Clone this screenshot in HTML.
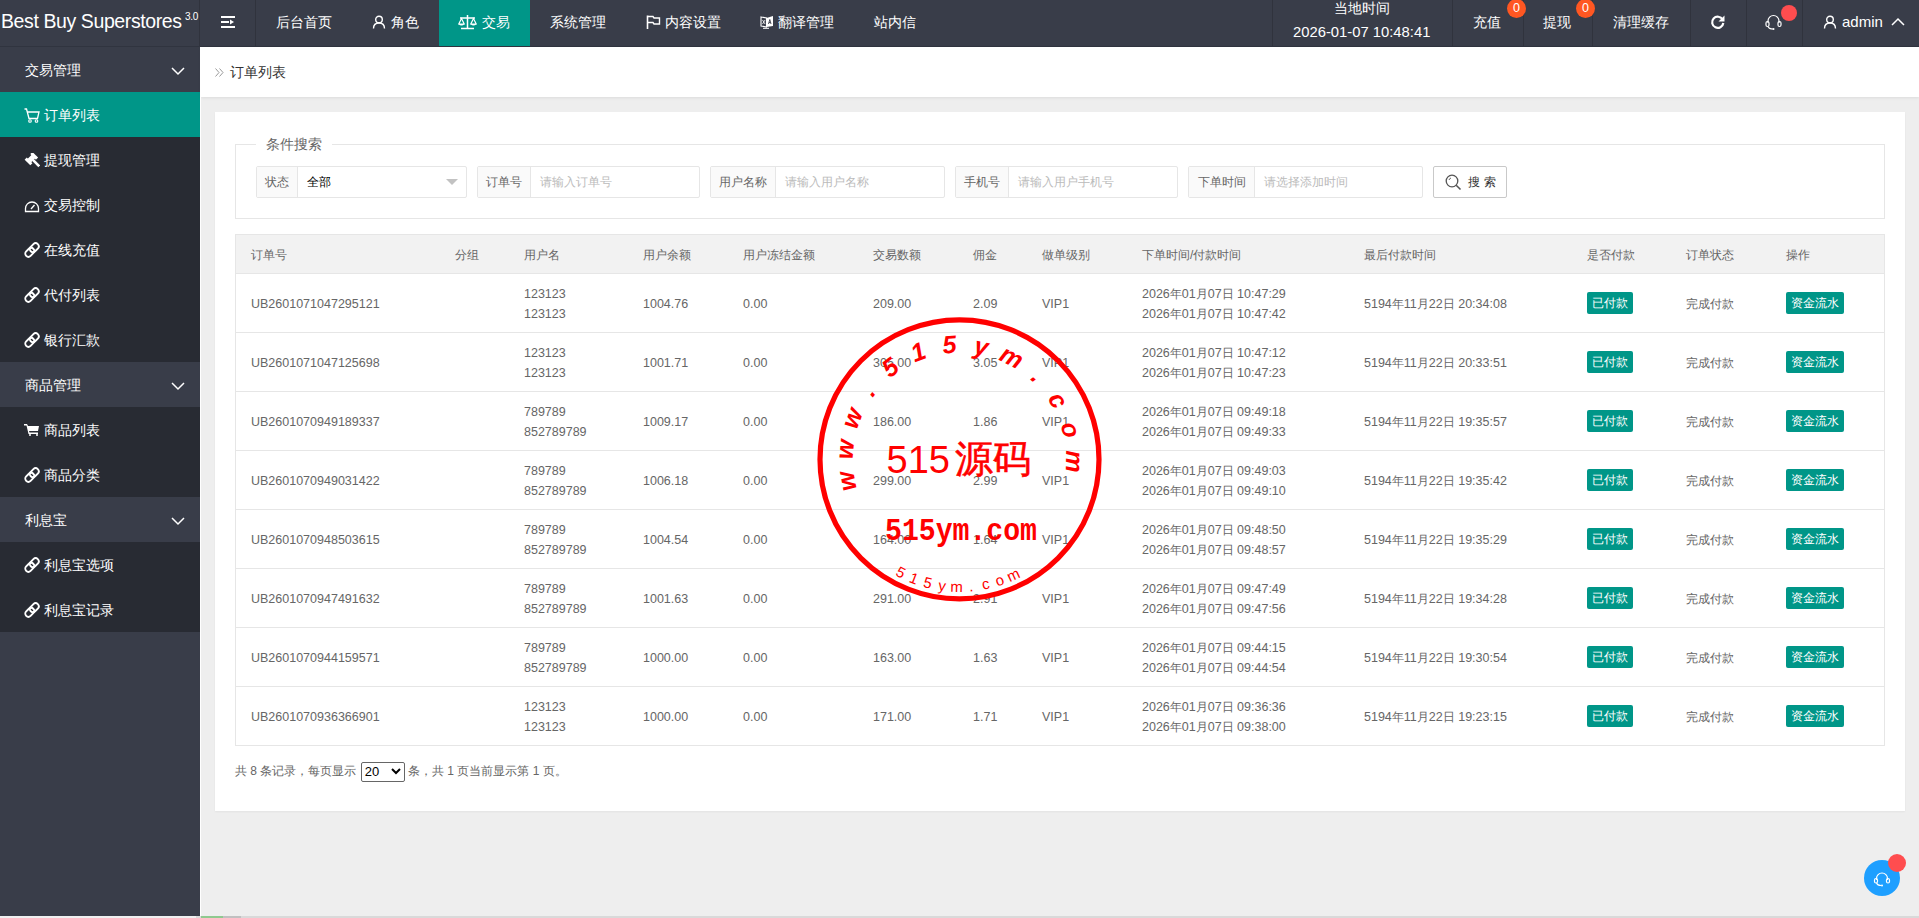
<!DOCTYPE html>
<html><head><meta charset="utf-8">
<style>
*{box-sizing:border-box;margin:0;padding:0}
html,body{width:1919px;height:918px;overflow:hidden}
body{position:relative;background:#eeeeee;font-family:"Liberation Sans",sans-serif;color:#666;font-size:14px}
.abs{position:absolute}
#hdr{left:0;top:0;width:1919px;height:47px;background:#393D49;border-bottom:1px solid #30343f}
#logo{left:1px;top:-2.5px;width:199px;height:46px;color:#fff;font-size:19.5px;line-height:46px;white-space:nowrap;letter-spacing:-0.4px}
#logo sup{font-size:10px;position:relative;top:-3px;left:5px;letter-spacing:0}
.nv{top:0;height:46px;line-height:44px;color:#fff;font-size:14px;white-space:nowrap}
.dv{top:0;width:1px;height:46px;background:#30333d}
#side{left:0;top:47px;width:200px;height:871px;background:#393D49}
.mi{position:absolute;left:0;width:200px;height:45px;line-height:45px;color:#fff;font-size:14px;white-space:nowrap}
.mi.ch{background:#282B33}
.mi.act{background:#009688}
.mi .t{position:absolute;left:44px;top:1px}
.mi.g .t{left:25px}
.mi svg{position:absolute;margin-top:1px}
#bc{left:201px;top:47px;width:1718px;height:50px;background:#fff;box-shadow:0 1px 3px rgba(0,0,0,.08)}
#card{left:215px;top:112px;width:1690px;height:699px;background:#fff;box-shadow:0 1px 2px rgba(0,0,0,.05)}
#fs{left:235px;top:144px;width:1650px;height:75px;border:1px solid #e6e6e6}
#legend{left:256px;top:135px;height:18px;padding:0 10px;background:#fff;font-size:14px;line-height:18px;color:#666}
.ig{top:166px;height:32px;border:1px solid #e6e6e6;border-radius:2px;background:#fff;font-size:12px;line-height:30px}
.ig .lb{position:absolute;left:0;top:0;height:30px;background:#fafafa;border-right:1px solid #e6e6e6;color:#666;text-align:center}
.ig .ph{position:absolute;top:0;color:#bbb;white-space:nowrap}
#tbl{left:235px;top:234px;width:1650px;height:512px;border:1px solid #e6e6e6}
.th{position:absolute;left:0;top:0;width:1648px;height:39px;background:#f2f2f2;border-bottom:1px solid #e6e6e6}
.hc{position:absolute;top:11px;line-height:18px;font-size:12px;color:#666;white-space:nowrap}
.row{position:absolute;left:0;width:1648px;height:59px;border-bottom:1px solid #e6e6e6}
.c{position:absolute;top:21px;line-height:18px;white-space:nowrap;font-size:12.5px;color:#666}
.c2{position:absolute;top:10px;line-height:20px;white-space:nowrap;font-size:12.5px;color:#666}
.badge{position:absolute;top:18px;height:22px;line-height:22px;background:#009688;color:#fff;font-size:12px;border-radius:2px;text-align:center}
.pg{font-size:12px;line-height:18px;color:#666;white-space:nowrap}
.pg .sel{display:inline-block;position:relative;width:44px;height:20px;margin-left:1px;border:1px solid #666;border-radius:2px;color:#000;font-size:13px;line-height:17px;padding-left:3px;vertical-align:middle;background:#fff}

i{font-style:normal;font-size:12px}

</style></head><body>
<div id="hdr" class="abs"></div>
<div id="logo" class="abs">Best Buy Superstores</div><div class="abs" style="left:185px;top:8px;font-size:10px;line-height:18px;color:#fff;letter-spacing:-0.3px">3.0</div>
<div class="dv abs" style="left:199px"></div>
<div class="dv abs" style="left:255px"></div>
<div class="dv abs" style="left:1272px"></div>
<div class="dv abs" style="left:1452px"></div>
<div class="dv abs" style="left:1523px"></div>
<div class="dv abs" style="left:1592px"></div>
<div class="dv abs" style="left:1690px"></div>
<div class="dv abs" style="left:1746px"></div>
<div class="dv abs" style="left:1802px"></div>
<div class="abs" style="left:439px;top:0;width:91px;height:46px;background:#009688"></div>
<svg class="abs" style="left:221px;top:15px" width="15" height="14" viewBox="0 0 15 14"><rect x="0" y="1" width="14" height="2" fill="#fff"/><rect x="0" y="6" width="8" height="2" fill="#fff"/><path d="M9 4.5 L13 7 L9 9.5Z" fill="#fff"/><rect x="0" y="11" width="14" height="2" fill="#fff"/></svg>
<div class="nv abs" style="left:276px">后台首页</div>
<div class="nv abs" style="left:391px">角色</div>
<div class="nv abs" style="left:482px">交易</div>
<div class="nv abs" style="left:550px">系统管理</div>
<div class="nv abs" style="left:665px">内容设置</div>
<div class="nv abs" style="left:778px">翻译管理</div>
<div class="nv abs" style="left:874px">站内信</div>
<div class="nv abs" style="left:1473px">充值</div>
<div class="nv abs" style="left:1543px">提现</div>
<div class="nv abs" style="left:1613px">清理缓存</div>
<svg class="abs" style="left:372px;top:15px" width="14" height="14" viewBox="0 0 14 14"><circle cx="7" cy="4.5" r="3.3" fill="none" stroke="#fff" stroke-width="1.4"/><path d="M1.5 13.5 C1.5 9.5 4 8 7 8 C10 8 12.5 9.5 12.5 13.5" fill="none" stroke="#fff" stroke-width="1.4"/></svg>
<svg class="abs" style="left:458px;top:14px" width="19" height="16" viewBox="0 0 19 16"><path d="M9.5 1 V14 M3 14.5 H16 M2 4 H17" stroke="#fff" stroke-width="1.5" fill="none"/><path d="M3.5 4.5 L0.8 10 H6.2Z M15.5 4.5 L12.8 10 H18.2Z" fill="none" stroke="#fff" stroke-width="1.2"/><path d="M0.5 10 Q3.5 13 6.5 10Z M12.5 10 Q15.5 13 18.5 10Z" fill="#fff"/></svg>
<svg class="abs" style="left:646px;top:15px" width="15" height="14" viewBox="0 0 15 14"><path d="M1.5 0.5 V14" stroke="#fff" stroke-width="1.6"/><path d="M2 1.5 H7 L8 3 H13.5 V9 H8 L7 7.5 H2" fill="none" stroke="#fff" stroke-width="1.4"/></svg>
<svg class="abs" style="left:760px;top:15px" width="14" height="14" viewBox="0 0 14 14"><path d="M1 2 L6.5 3 V12 L1 11Z" fill="none" stroke="#fff" stroke-width="1.1"/><path d="M6.5 3 L13 1 V11 L6.5 12Z" fill="#fff"/><path d="M8.5 9 L9.8 4.5 L11 9 M9 7.5 H10.6" fill="none" stroke="#393D49" stroke-width="0.9"/><path d="M2.5 5 L5 9 M5 5 L2.5 9" stroke="#fff" stroke-width="0.8"/><path d="M3 13.3 H9" stroke="#fff" stroke-width="1"/></svg>
<div class="nv abs" style="left:1334px;top:-14px">当地时间</div>
<div class="nv abs" style="left:1293px;top:10px;font-size:14.8px">2026-01-07 10:48:41</div>
<div class="abs" style="left:1507.0px;top:-1.5px;width:19px;height:19px;border-radius:50%;background:#FF5722;color:#fff;font-size:12.5px;line-height:19px;text-align:center">0</div>
<div class="abs" style="left:1576.0px;top:-1.5px;width:19px;height:19px;border-radius:50%;background:#FF5722;color:#fff;font-size:12.5px;line-height:19px;text-align:center">0</div>
<svg class="abs" style="left:1710px;top:14px" width="16" height="16" viewBox="0 0 16 16"><path d="M12.6 5.5 A5.6 5.6 0 1 0 13.3 9" fill="none" stroke="#fff" stroke-width="2.2"/><path d="M14.5 1.5 V7.5 H8.5Z" fill="#fff"/></svg>
<svg class="abs" style="left:1765px;top:14px" width="17" height="16" viewBox="0 0 17 16"><path d="M3 9 V7 A5.5 5.5 0 0 1 14 7 V9" fill="none" stroke="#fff" stroke-width="1.2"/><rect x="1" y="7.5" width="3" height="5" rx="1.5" fill="none" stroke="#fff" stroke-width="1.2"/><rect x="13" y="7.5" width="3" height="5" rx="1.5" fill="none" stroke="#fff" stroke-width="1.2"/><path d="M3 12.5 Q4 15 8 15" fill="none" stroke="#fff" stroke-width="1.1"/><circle cx="8.5" cy="15" r="1" fill="#fff"/></svg>
<div class="abs" style="left:1781px;top:5px;width:16px;height:16px;border-radius:50%;background:#FF4D4F"></div>
<svg class="abs" style="left:1823px;top:15px" width="14" height="14" viewBox="0 0 14 14"><circle cx="7" cy="4.5" r="3.3" fill="none" stroke="#fff" stroke-width="1.4"/><path d="M1.5 13.5 C1.5 9.5 4 8 7 8 C10 8 12.5 9.5 12.5 13.5" fill="none" stroke="#fff" stroke-width="1.4"/></svg>
<div class="nv abs" style="left:1842px;font-size:15px">admin</div>
<svg class="abs" style="left:1891px;top:17px" width="14" height="9" viewBox="0 0 14 9"><path d="M1 8 L7 2 L13 8" fill="none" stroke="#fff" stroke-width="1.5"/></svg>
<div id="side" class="abs"></div>
<div class="mi g" style="top:47px"><span class="t">交易管理</span><svg style="left:171px;top:19px" width="14" height="9" viewBox="0 0 14 9"><path d="M1 1 L7 7 L13 1" fill="none" stroke="#fff" stroke-width="1.5"/></svg></div>
<div class="mi act" style="top:92px"><svg style="left:24px;top:15px" width="16" height="15" viewBox="0 0 16 15"><path d="M0.5 1 H2.5 L5 10.5 H13.5 L15 4 H3.5" fill="none" stroke="#fff" stroke-width="1.3"/><circle cx="6" cy="13" r="1.3" fill="none" stroke="#fff" stroke-width="1.1"/><circle cx="12.5" cy="13" r="1.3" fill="none" stroke="#fff" stroke-width="1.1"/></svg><span class="t">订单列表</span></div>
<div class="mi ch" style="top:137px"><svg style="left:24px;top:15px" width="16" height="16" viewBox="0 0 16 16"><g transform="rotate(45 7 6)"><rect x="3" y="0" width="8" height="3" fill="#fff"/><rect x="3" y="8" width="8" height="3" fill="#fff"/><rect x="4.5" y="2.5" width="5" height="6" fill="#fff"/><rect x="9" y="4" width="9" height="2.6" fill="#fff"/></g></svg><span class="t">提现管理</span></div>
<div class="mi ch" style="top:182px"><svg style="left:24px;top:17px" width="16" height="13" viewBox="0 0 16 13"><path d="M1.5 11.5 V8.5 A6.5 6.5 0 0 1 14.5 8.5 V11.5 Z" fill="none" stroke="#fff" stroke-width="1.3"/><path d="M7 9 L10.5 5" stroke="#fff" stroke-width="1.4"/></svg><span class="t">交易控制</span></div>
<div class="mi ch" style="top:227px"><svg style="left:24px;top:14px" width="16" height="16" viewBox="0 0 16 16"><g transform="rotate(-45 8 8)" fill="none" stroke="#fff" stroke-width="1.9"><rect x="-0.2" y="4.9" width="10" height="6.2" rx="3.1"/><rect x="6.2" y="4.9" width="10" height="6.2" rx="3.1"/></g></svg><span class="t">在线充值</span></div>
<div class="mi ch" style="top:272px"><svg style="left:24px;top:14px" width="16" height="16" viewBox="0 0 16 16"><g transform="rotate(-45 8 8)" fill="none" stroke="#fff" stroke-width="1.9"><rect x="-0.2" y="4.9" width="10" height="6.2" rx="3.1"/><rect x="6.2" y="4.9" width="10" height="6.2" rx="3.1"/></g></svg><span class="t">代付列表</span></div>
<div class="mi ch" style="top:317px"><svg style="left:24px;top:14px" width="16" height="16" viewBox="0 0 16 16"><g transform="rotate(-45 8 8)" fill="none" stroke="#fff" stroke-width="1.9"><rect x="-0.2" y="4.9" width="10" height="6.2" rx="3.1"/><rect x="6.2" y="4.9" width="10" height="6.2" rx="3.1"/></g></svg><span class="t">银行汇款</span></div>
<div class="mi g" style="top:362px"><span class="t">商品管理</span><svg style="left:171px;top:19px" width="14" height="9" viewBox="0 0 14 9"><path d="M1 1 L7 7 L13 1" fill="none" stroke="#fff" stroke-width="1.5"/></svg></div>
<div class="mi ch" style="top:407px"><svg style="left:24px;top:15px" width="15" height="13" viewBox="0 0 15 13"><path d="M0 1 H3 L4 3 H15 L14 8 H5 L5.5 9.5 H14 V11 H4.5 L2.5 2.5 H0Z" fill="#fff"/><circle cx="6" cy="12" r="1" fill="#fff"/><circle cx="13" cy="12" r="1" fill="#fff"/></svg><span class="t">商品列表</span></div>
<div class="mi ch" style="top:452px"><svg style="left:24px;top:14px" width="16" height="16" viewBox="0 0 16 16"><g transform="rotate(-45 8 8)" fill="none" stroke="#fff" stroke-width="1.9"><rect x="-0.2" y="4.9" width="10" height="6.2" rx="3.1"/><rect x="6.2" y="4.9" width="10" height="6.2" rx="3.1"/></g></svg><span class="t">商品分类</span></div>
<div class="mi g" style="top:497px"><span class="t">利息宝</span><svg style="left:171px;top:19px" width="14" height="9" viewBox="0 0 14 9"><path d="M1 1 L7 7 L13 1" fill="none" stroke="#fff" stroke-width="1.5"/></svg></div>
<div class="mi ch" style="top:542px"><svg style="left:24px;top:14px" width="16" height="16" viewBox="0 0 16 16"><g transform="rotate(-45 8 8)" fill="none" stroke="#fff" stroke-width="1.9"><rect x="-0.2" y="4.9" width="10" height="6.2" rx="3.1"/><rect x="6.2" y="4.9" width="10" height="6.2" rx="3.1"/></g></svg><span class="t">利息宝选项</span></div>
<div class="mi ch" style="top:587px"><svg style="left:24px;top:14px" width="16" height="16" viewBox="0 0 16 16"><g transform="rotate(-45 8 8)" fill="none" stroke="#fff" stroke-width="1.9"><rect x="-0.2" y="4.9" width="10" height="6.2" rx="3.1"/><rect x="6.2" y="4.9" width="10" height="6.2" rx="3.1"/></g></svg><span class="t">利息宝记录</span></div>
<div id="bc" class="abs"></div>
<svg class="abs" style="left:215px;top:68px" width="9" height="9" viewBox="0 0 9 9"><path d="M0.5 0.5 L4 4.5 L0.5 8.5 M4.5 0.5 L8 4.5 L4.5 8.5" fill="none" stroke="#999" stroke-width="1"/></svg>
<div class="abs" style="left:230px;top:63px;font-size:14px;line-height:18px;color:#333">订单列表</div>
<div id="card" class="abs"></div>
<div id="fs" class="abs"></div>
<div id="legend" class="abs">条件搜索</div>
<div class="ig abs" style="left:256px;width:211px"><div class="lb" style="width:41px">状态</div><div class="ph" style="left:50px;color:#000">全部</div><svg style="position:absolute;left:189px;top:12px" width="12" height="7" viewBox="0 0 12 7"><path d="M0 0 H12 L6 6Z" fill="#c2c2c2"/></svg></div>
<div class="ig abs" style="left:477px;width:223px"><div class="lb" style="width:53px">订单号</div><div class="ph" style="left:62px">请输入订单号</div></div>
<div class="ig abs" style="left:710px;width:235px"><div class="lb" style="width:65px">用户名称</div><div class="ph" style="left:74px">请输入用户名称</div></div>
<div class="ig abs" style="left:955px;width:223px"><div class="lb" style="width:53px">手机号</div><div class="ph" style="left:62px">请输入用户手机号</div></div>
<div class="ig abs" style="left:1188px;width:235px"><div class="lb" style="width:66px">下单时间</div><div class="ph" style="left:75px">请选择添加时间</div></div>
<div class="abs" style="left:1433px;top:166px;width:74px;height:32px;border:1px solid #c9c9c9;border-radius:2px;background:#fff"></div>
<svg class="abs" style="left:1445px;top:174px" width="17" height="17" viewBox="0 0 17 17"><circle cx="7" cy="7" r="5.8" fill="none" stroke="#555" stroke-width="1.3"/><path d="M11.2 11.2 L15.5 15.5" stroke="#555" stroke-width="1.6"/><path d="M4 6 A3 3 0 0 1 6 4" fill="none" stroke="#555" stroke-width="0.9"/></svg>
<div class="abs" style="left:1468px;top:174px;font-size:12px;line-height:16px;color:#333;letter-spacing:4px">搜索</div>
<div id="tbl" class="abs">
<div class="th"></div>
<div class="hc" style="left:15px">订单号</div>
<div class="hc" style="left:219px">分组</div>
<div class="hc" style="left:288px">用户名</div>
<div class="hc" style="left:407px">用户余额</div>
<div class="hc" style="left:507px">用户冻结金额</div>
<div class="hc" style="left:637px">交易数额</div>
<div class="hc" style="left:737px">佣金</div>
<div class="hc" style="left:806px">做单级别</div>
<div class="hc" style="left:906px">下单时间/付款时间</div>
<div class="hc" style="left:1128px">最后付款时间</div>
<div class="hc" style="left:1351px">是否付款</div>
<div class="hc" style="left:1450px">订单状态</div>
<div class="hc" style="left:1550px">操作</div>
<div class="row" style="top:39px"><div class="c" style="left:15px">UB2601071047295121</div><div class="c2" style="left:288px">123123<br>123123</div><div class="c" style="left:407px">1004.76</div><div class="c" style="left:507px">0.00</div><div class="c" style="left:637px">209.00</div><div class="c" style="left:737px">2.09</div><div class="c" style="left:806px">VIP1</div><div class="c2" style="left:906px">2026<i>年</i>01<i>月</i>07<i>日</i> 10:47:29<br>2026<i>年</i>01<i>月</i>07<i>日</i> 10:47:42</div><div class="c" style="left:1128px">5194<i>年</i>11<i>月</i>22<i>日</i> 20:34:08</div><div class="badge" style="left:1351px;width:46px">已付款</div><div class="c" style="left:1450px;font-size:12px">完成付款</div><div class="badge" style="left:1550px;width:58px">资金流水</div></div>
<div class="row" style="top:98px"><div class="c" style="left:15px">UB2601071047125698</div><div class="c2" style="left:288px">123123<br>123123</div><div class="c" style="left:407px">1001.71</div><div class="c" style="left:507px">0.00</div><div class="c" style="left:637px">305.00</div><div class="c" style="left:737px">3.05</div><div class="c" style="left:806px">VIP1</div><div class="c2" style="left:906px">2026<i>年</i>01<i>月</i>07<i>日</i> 10:47:12<br>2026<i>年</i>01<i>月</i>07<i>日</i> 10:47:23</div><div class="c" style="left:1128px">5194<i>年</i>11<i>月</i>22<i>日</i> 20:33:51</div><div class="badge" style="left:1351px;width:46px">已付款</div><div class="c" style="left:1450px;font-size:12px">完成付款</div><div class="badge" style="left:1550px;width:58px">资金流水</div></div>
<div class="row" style="top:157px"><div class="c" style="left:15px">UB2601070949189337</div><div class="c2" style="left:288px">789789<br>852789789</div><div class="c" style="left:407px">1009.17</div><div class="c" style="left:507px">0.00</div><div class="c" style="left:637px">186.00</div><div class="c" style="left:737px">1.86</div><div class="c" style="left:806px">VIP1</div><div class="c2" style="left:906px">2026<i>年</i>01<i>月</i>07<i>日</i> 09:49:18<br>2026<i>年</i>01<i>月</i>07<i>日</i> 09:49:33</div><div class="c" style="left:1128px">5194<i>年</i>11<i>月</i>22<i>日</i> 19:35:57</div><div class="badge" style="left:1351px;width:46px">已付款</div><div class="c" style="left:1450px;font-size:12px">完成付款</div><div class="badge" style="left:1550px;width:58px">资金流水</div></div>
<div class="row" style="top:216px"><div class="c" style="left:15px">UB2601070949031422</div><div class="c2" style="left:288px">789789<br>852789789</div><div class="c" style="left:407px">1006.18</div><div class="c" style="left:507px">0.00</div><div class="c" style="left:637px">299.00</div><div class="c" style="left:737px">2.99</div><div class="c" style="left:806px">VIP1</div><div class="c2" style="left:906px">2026<i>年</i>01<i>月</i>07<i>日</i> 09:49:03<br>2026<i>年</i>01<i>月</i>07<i>日</i> 09:49:10</div><div class="c" style="left:1128px">5194<i>年</i>11<i>月</i>22<i>日</i> 19:35:42</div><div class="badge" style="left:1351px;width:46px">已付款</div><div class="c" style="left:1450px;font-size:12px">完成付款</div><div class="badge" style="left:1550px;width:58px">资金流水</div></div>
<div class="row" style="top:275px"><div class="c" style="left:15px">UB2601070948503615</div><div class="c2" style="left:288px">789789<br>852789789</div><div class="c" style="left:407px">1004.54</div><div class="c" style="left:507px">0.00</div><div class="c" style="left:637px">164.00</div><div class="c" style="left:737px">1.64</div><div class="c" style="left:806px">VIP1</div><div class="c2" style="left:906px">2026<i>年</i>01<i>月</i>07<i>日</i> 09:48:50<br>2026<i>年</i>01<i>月</i>07<i>日</i> 09:48:57</div><div class="c" style="left:1128px">5194<i>年</i>11<i>月</i>22<i>日</i> 19:35:29</div><div class="badge" style="left:1351px;width:46px">已付款</div><div class="c" style="left:1450px;font-size:12px">完成付款</div><div class="badge" style="left:1550px;width:58px">资金流水</div></div>
<div class="row" style="top:334px"><div class="c" style="left:15px">UB2601070947491632</div><div class="c2" style="left:288px">789789<br>852789789</div><div class="c" style="left:407px">1001.63</div><div class="c" style="left:507px">0.00</div><div class="c" style="left:637px">291.00</div><div class="c" style="left:737px">2.91</div><div class="c" style="left:806px">VIP1</div><div class="c2" style="left:906px">2026<i>年</i>01<i>月</i>07<i>日</i> 09:47:49<br>2026<i>年</i>01<i>月</i>07<i>日</i> 09:47:56</div><div class="c" style="left:1128px">5194<i>年</i>11<i>月</i>22<i>日</i> 19:34:28</div><div class="badge" style="left:1351px;width:46px">已付款</div><div class="c" style="left:1450px;font-size:12px">完成付款</div><div class="badge" style="left:1550px;width:58px">资金流水</div></div>
<div class="row" style="top:393px"><div class="c" style="left:15px">UB2601070944159571</div><div class="c2" style="left:288px">789789<br>852789789</div><div class="c" style="left:407px">1000.00</div><div class="c" style="left:507px">0.00</div><div class="c" style="left:637px">163.00</div><div class="c" style="left:737px">1.63</div><div class="c" style="left:806px">VIP1</div><div class="c2" style="left:906px">2026<i>年</i>01<i>月</i>07<i>日</i> 09:44:15<br>2026<i>年</i>01<i>月</i>07<i>日</i> 09:44:54</div><div class="c" style="left:1128px">5194<i>年</i>11<i>月</i>22<i>日</i> 19:30:54</div><div class="badge" style="left:1351px;width:46px">已付款</div><div class="c" style="left:1450px;font-size:12px">完成付款</div><div class="badge" style="left:1550px;width:58px">资金流水</div></div>
<div class="row" style="top:452px"><div class="c" style="left:15px">UB2601070936366901</div><div class="c2" style="left:288px">123123<br>123123</div><div class="c" style="left:407px">1000.00</div><div class="c" style="left:507px">0.00</div><div class="c" style="left:637px">171.00</div><div class="c" style="left:737px">1.71</div><div class="c" style="left:806px">VIP1</div><div class="c2" style="left:906px">2026<i>年</i>01<i>月</i>07<i>日</i> 09:36:36<br>2026<i>年</i>01<i>月</i>07<i>日</i> 09:38:00</div><div class="c" style="left:1128px">5194<i>年</i>11<i>月</i>22<i>日</i> 19:23:15</div><div class="badge" style="left:1351px;width:46px">已付款</div><div class="c" style="left:1450px;font-size:12px">完成付款</div><div class="badge" style="left:1550px;width:58px">资金流水</div></div>
</div>
<div class="abs pg" style="left:235px;top:762px">共 8 条记录，每页显示 <span class="sel">20<svg width="10" height="7" viewBox="0 0 10 7" style="position:absolute;left:29px;top:5px"><path d="M1 1 L5 5 L9 1" fill="none" stroke="#000" stroke-width="2"/></svg></span> 条，共 1 页当前显示第 1 页。</div>
<svg class="abs" style="left:800px;top:300px" width="320" height="320" viewBox="0 0 320 320"><circle cx="159.5" cy="159.39999999999998" r="139.5" fill="none" stroke="#f00" stroke-width="5.2"/><text x="0" y="0" transform="translate(46.1,181.4) rotate(-101.0)" text-anchor="middle" dominant-baseline="central" font-family="Liberation Sans" font-style="italic" font-weight="bold" font-size="25" fill="#f00">w</text><text x="0" y="0" transform="translate(44.4,149.3) rotate(-85.0)" text-anchor="middle" dominant-baseline="central" font-family="Liberation Sans" font-style="italic" font-weight="bold" font-size="25" fill="#f00">w</text><text x="0" y="0" transform="translate(51.7,118.0) rotate(-69.0)" text-anchor="middle" dominant-baseline="central" font-family="Liberation Sans" font-style="italic" font-weight="bold" font-size="25" fill="#f00">w</text><text x="0" y="0" transform="translate(67.3,89.9) rotate(-53.0)" text-anchor="middle" dominant-baseline="central" font-family="Liberation Sans" font-style="italic" font-weight="bold" font-size="25" fill="#f00">.</text><text x="0" y="0" transform="translate(90.0,67.2) rotate(-37.0)" text-anchor="middle" dominant-baseline="central" font-family="Liberation Sans" font-style="italic" font-weight="bold" font-size="25" fill="#f00">5</text><text x="0" y="0" transform="translate(118.1,51.6) rotate(-21.0)" text-anchor="middle" dominant-baseline="central" font-family="Liberation Sans" font-style="italic" font-weight="bold" font-size="25" fill="#f00">1</text><text x="0" y="0" transform="translate(149.4,44.3) rotate(-5.0)" text-anchor="middle" dominant-baseline="central" font-family="Liberation Sans" font-style="italic" font-weight="bold" font-size="25" fill="#f00">5</text><text x="0" y="0" transform="translate(181.5,46.0) rotate(11.0)" text-anchor="middle" dominant-baseline="central" font-family="Liberation Sans" font-style="italic" font-weight="bold" font-size="25" fill="#f00">y</text><text x="0" y="0" transform="translate(211.9,56.5) rotate(27.0)" text-anchor="middle" dominant-baseline="central" font-family="Liberation Sans" font-style="italic" font-weight="bold" font-size="25" fill="#f00">m</text><text x="0" y="0" transform="translate(238.3,74.9) rotate(43.0)" text-anchor="middle" dominant-baseline="central" font-family="Liberation Sans" font-style="italic" font-weight="bold" font-size="25" fill="#f00">.</text><text x="0" y="0" transform="translate(258.5,99.9) rotate(59.0)" text-anchor="middle" dominant-baseline="central" font-family="Liberation Sans" font-style="italic" font-weight="bold" font-size="25" fill="#f00">c</text><text x="0" y="0" transform="translate(271.1,129.5) rotate(75.0)" text-anchor="middle" dominant-baseline="central" font-family="Liberation Sans" font-style="italic" font-weight="bold" font-size="25" fill="#f00">o</text><text x="0" y="0" transform="translate(275.0,161.4) rotate(91.0)" text-anchor="middle" dominant-baseline="central" font-family="Liberation Sans" font-style="italic" font-weight="bold" font-size="25" fill="#f00">m</text><text x="0" y="0" transform="translate(100.9,272.1) rotate(27.5)" text-anchor="middle" dominant-baseline="central" font-family="Liberation Sans" font-size="15" fill="#f00">5</text><text x="0" y="0" transform="translate(114.1,278.0) rotate(21.0)" text-anchor="middle" dominant-baseline="central" font-family="Liberation Sans" font-size="15" fill="#f00">1</text><text x="0" y="0" transform="translate(127.9,282.4) rotate(14.4)" text-anchor="middle" dominant-baseline="central" font-family="Liberation Sans" font-size="15" fill="#f00">5</text><text x="0" y="0" transform="translate(142.2,285.2) rotate(7.8)" text-anchor="middle" dominant-baseline="central" font-family="Liberation Sans" font-size="15" fill="#f00">y</text><text x="0" y="0" transform="translate(156.6,286.4) rotate(1.3)" text-anchor="middle" dominant-baseline="central" font-family="Liberation Sans" font-size="15" fill="#f00">m</text><text x="0" y="0" transform="translate(171.1,285.9) rotate(-5.2)" text-anchor="middle" dominant-baseline="central" font-family="Liberation Sans" font-size="15" fill="#f00">.</text><text x="0" y="0" transform="translate(185.5,283.7) rotate(-11.8)" text-anchor="middle" dominant-baseline="central" font-family="Liberation Sans" font-size="15" fill="#f00">c</text><text x="0" y="0" transform="translate(199.5,279.9) rotate(-18.3)" text-anchor="middle" dominant-baseline="central" font-family="Liberation Sans" font-size="15" fill="#f00">o</text><text x="0" y="0" transform="translate(213.0,274.6) rotate(-24.9)" text-anchor="middle" dominant-baseline="central" font-family="Liberation Sans" font-size="15" fill="#f00">m</text><text x="86.5" y="172.7" font-family="Liberation Sans" font-size="38" fill="#f00">515</text><text x="155" y="172" font-family="Liberation Sans" font-size="38" fill="#f00" stroke="#f00" stroke-width="0.6">源码</text><text x="85" y="239.70000000000005" font-family="Liberation Mono" font-weight="bold" font-size="31" fill="#f00" textLength="152" lengthAdjust="spacingAndGlyphs">515ym.com</text></svg>
<div class="abs" style="left:1864px;top:860px;width:36px;height:36px;border-radius:50%;background:#1E9FFF"></div>
<svg class="abs" style="left:1873px;top:871px" width="18" height="16" viewBox="0 0 18 16"><path d="M3.5 9 V7.5 A5.5 5.5 0 0 1 14.5 7.5 V9" fill="none" stroke="#fff" stroke-width="1.2"/><rect x="1.5" y="7.5" width="3" height="4.5" rx="1.5" fill="none" stroke="#fff" stroke-width="1.2"/><rect x="13.5" y="7.5" width="3" height="4.5" rx="1.5" fill="none" stroke="#fff" stroke-width="1.2"/><path d="M3.5 12 Q4.5 14.5 8 14.5" fill="none" stroke="#fff" stroke-width="1.1"/><circle cx="9" cy="14.5" r="1" fill="#fff"/></svg>
<div class="abs" style="left:1888px;top:854px;width:18px;height:18px;border-radius:50%;background:#FF4D4F"></div>
<div class="abs" style="left:0;top:916px;width:1919px;height:2px;background:#d9d9d9"></div>
<div class="abs" style="left:0;top:916px;width:196px;height:2px;background:#f0f0f0"></div>
<div class="abs" style="left:201px;top:916px;width:22px;height:2px;background:#8fc98f"></div>
<div class="abs" style="left:223px;top:916px;width:18px;height:2px;background:#c0c0c0"></div>
<div class="abs" style="left:200px;top:47px;width:1px;height:869px;background:#fff"></div>
</body></html>
